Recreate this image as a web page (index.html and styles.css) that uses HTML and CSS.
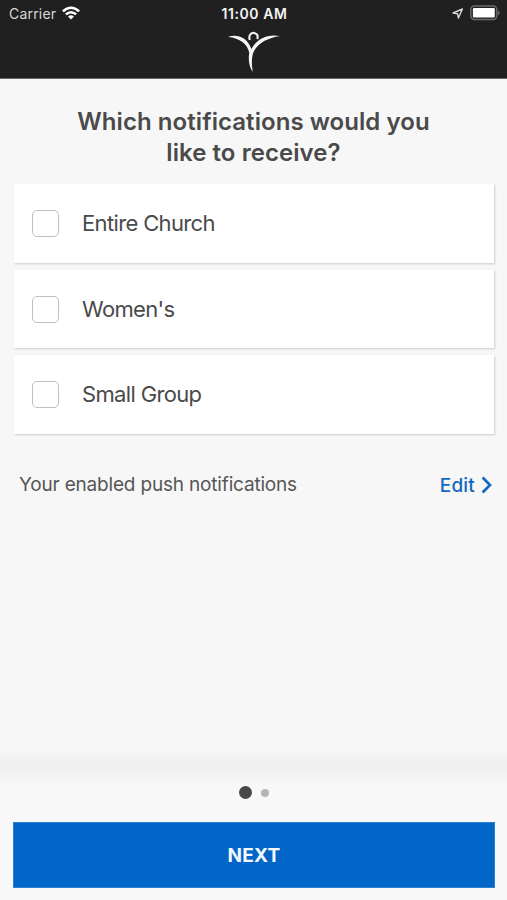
FILE: index.html
```html
<!DOCTYPE html>
<html lang="en">
<head>
<meta charset="utf-8">
<title>Notifications</title>
<link rel="stylesheet" href="styles.css">
</head>
<body>
<header class="top">
  <div class="status">
    <div class="status-left"><span class="carrier">Carrier</span>
      <svg class="wifi" width="18" height="14" viewBox="0 0 18 14"><path d="M0 4.4Q9-3.6 18 4.4L16.2 6.2Q9-.3 1.8 6.2Z M3 7.5Q9 2.3 15 7.5L13.2 9.3Q9 5.7 4.8 9.3Z M6 10.6Q9 8 12 10.6L9 13.6Z" fill="#fff"/></svg>
    </div>
    <span class="time">11:00 AM</span>
    <div class="status-right">
      <svg width="12" height="12" viewBox="0 0 12 12"><path d="M1 6L10.4 2 6.4 11 5.6 6.8Z" fill="none" stroke="#d8d8d8" stroke-width="1.4" stroke-linejoin="round"/></svg>
      <svg width="31" height="16" viewBox="0 0 31 16"><rect x=".8" y="1" width="26" height="13.4" rx="3.6" fill="none" stroke="#6a6a6a" stroke-width="1.5"/><rect x="2.9" y="3" width="21.9" height="9.4" rx="1.2" fill="#fff"/><path d="M28 5.2Q31.5 7.7 28 10.2Z" fill="#6a6a6a"/></svg>
    </div>
  </div>
  <svg class="logo" width="54" height="42" viewBox="0 0 54 42"><path d="M1 6C9 3 20 5.5 24.4 18C29 9 39 2.5 53 5C40 7 29 13 25.8 23C24.3 29 24.8 35 25.8 41C21.6 35 21.2 27 22.3 22C20.5 13 13 7 1 6Z" fill="#f5f5f5"/><path d="M22.8 9C21.4 5 23.4 1.9 26.3 1.9C29.6 1.9 31.6 4.6 30.2 8" fill="none" stroke="#f0f0f0" stroke-width="2.1"/></svg>
</header>
<main>
  <h1>Which notifications would you<br>like to receive?</h1>
  <div class="list">
    <label class="card"><span class="box"></span><span class="name">Entire Church</span></label>
    <label class="card"><span class="box"></span><span class="name">Women's</span></label>
    <label class="card"><span class="box"></span><span class="name">Small Group</span></label>
  </div>
  <div class="enabled"><span class="push">Your enabled push notifications</span>
    <a class="edit"><span>Edit</span><svg width="12" height="18" viewBox="0 0 12 18"><path d="M1.6 1.5L9 9 1.6 16.5" fill="none" stroke="#1268c3" stroke-width="2.7"/></svg></a>
  </div>
</main>
<footer>
  <div class="dots"><i class="dot active"></i><i class="dot"></i></div>
  <div class="next"><span>NEXT</span></div>
</footer>
</body>
</html>
```
FILE: styles.css
```css
* { box-sizing: border-box; }
body {
  margin: 0;
  height: 900px;
  display: flex;
  flex-direction: column;
  background: #f7f7f7;
  color: #4a4a4a;
  font-family: Inter, "Liberation Sans", sans-serif;
  overflow: hidden;
}
svg { display: block; flex: none; }
.top { height: 79px; background: #202020; border-bottom: 1px solid #686868; flex: none; }
.status {
  height: 26px;
  display: grid;
  grid-template-columns: 1fr auto 1fr;
  align-items: center;
  padding: 0 6px 0 9px;
  color: #f4f4f4;
  font-size: 14px;
}
.status-left, .status-right { display: flex; align-items: center; }
.status-left { gap: 6px; }
.status-right { justify-content: flex-end; gap: 6px; }
.carrier { color: #d8d8d8; letter-spacing: .2px; }
.time { font-weight: 600; letter-spacing: .6px; margin-left: -1px; }
.logo { margin: 5px 0 0 227px; }
main { flex: 1; }
h1 { margin: 0; padding-top: 27px; height: 105px; font-size: 24px; line-height: 31px; font-weight: 600; letter-spacing: .06px; text-align: center; }
.list { display: grid; gap: 7px; padding: 0 13px 0 14px; }
.card {
  height: 78.7px;
  display: flex;
  align-items: center;
  gap: 23px;
  padding-left: 18px;
  background: #fff;
  font-size: 22px;
  box-shadow: 1px 1px 2px #ccc;
}
.name { letter-spacing: -.65px; padding-bottom: 1px; }
.box { width: 27px; height: 27px; border: 1.5px solid #c0c0c0; border-radius: 5px; flex: none; }
.enabled { display: flex; justify-content: space-between; align-items: center; margin-top: 36px; height: 30px; padding: 0 14px 0 19px; font-size: 19px; color: #565656; }
.push { letter-spacing: -.18px; margin-top: -1px; }
.edit { display: flex; align-items: center; gap: 6px; color: #1268c3; font-weight: 500; letter-spacing: .2px; }
footer { height: 150px; flex: none; padding: 0 12px 0 13px; background: linear-gradient(#f7f7f7 0, #efefef 14px, #f0f0f0 20px, #f8f8f8 34px, #f9f9f9 100%); }
.dots { height: 72px; padding: 13px 0 0 0; display: flex; justify-content: center; align-items: center; gap: 9px; }
.dot { width: 8px; height: 8px; border-radius: 50%; background: #b5b5b5; }
.active { width: 13px; height: 13px; background: #484848; }
.next { height: 66px; display: flex; align-items: center; justify-content: center; background: #0265c8; border: 1px solid #2b82d4; color: #f4faff; font-size: 19px; font-weight: 700; letter-spacing: .2px; }
```
